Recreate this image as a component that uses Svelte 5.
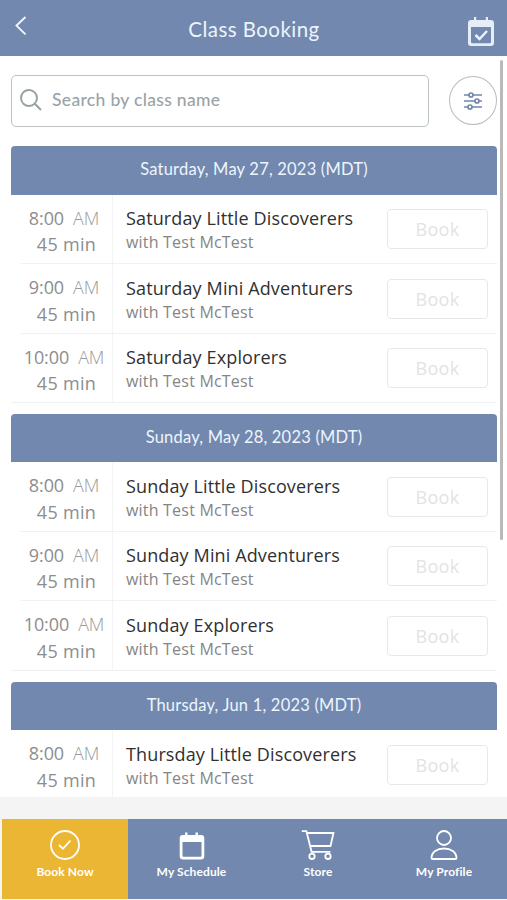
<script>
  let search = '';
  let active = 'Book Now';

  const days = [
    {
      date: 'Saturday, May 27, 2023 (MDT)',
      classes: [
        { time: '8:00', name: 'Saturday Little Discoverers' },
        { time: '9:00', name: 'Saturday Mini Adventurers' },
        { time: '10:00', name: 'Saturday Explorers' }
      ]
    },
    {
      date: 'Sunday, May 28, 2023 (MDT)',
      classes: [
        { time: '8:00', name: 'Sunday Little Discoverers' },
        { time: '9:00', name: 'Sunday Mini Adventurers' },
        { time: '10:00', name: 'Sunday Explorers' }
      ]
    },
    {
      date: 'Thursday, Jun 1, 2023 (MDT)',
      classes: [{ time: '8:00', name: 'Thursday Little Discoverers' }]
    }
  ];

  const tabs = ['Book Now', 'My Schedule', 'Store', 'My Profile'];
</script>

<div class="app">
  <header>
    <button class="back" aria-label="Back">
      <svg width="12" height="20" viewBox="0 0 12 20"><path d="M10.500 1 1.500 9.600l9 8.800" /></svg>
    </button>
    <h1>Class Booking</h1>
    <button class="calendar" aria-label="Calendar">
      <svg width="28" height="31" viewBox="0 0 28 31">
        <path class="solid" fill-rule="evenodd" d="M4 4h3V1h2.200v3h9.600V1H21v3h3a3 3 0 0 1 3 3v20a3 3 0 0 1-3 3H4a3 3 0 0 1-3-3V7a3 3 0 0 1 3-3ZM4 11v15a1.300 1.300 0 0 0 1.300 1.300h17.400A1.300 1.300 0 0 0 24 26V11Z" />
        <path class="check" d="m8.500 19 4 4 7.500-8" />
      </svg>
    </button>
  </header>

  <main>
    <div class="search-row">
      <label class="search">
        <svg width="22" height="22" viewBox="0 0 22 22"><circle cx="9" cy="9" r="8" /><path d="m14.800 14.800 6.200 6.200" /></svg>
        <input type="text" bind:value={search} placeholder="Search by class name" />
      </label>
      <button class="filter" aria-label="Filter">
        <svg width="20" height="18" viewBox="0 0 20 18">
          <path d="M1 3h5M10 3h9M1 9h11M16 9h3M1 15h4M9 15h10" />
          <circle cx="8" cy="3" r="2" /><circle cx="14" cy="9" r="2" /><circle cx="7" cy="15" r="2" />
        </svg>
      </button>
    </div>

    {#each days as day}
      <section>
        <h2>{day.date}</h2>
        {#each day.classes as item}
          <div class="class-item">
            <div class="time">
              <p class="start">{item.time}<span>AM</span></p>
              <p class="length">45 min</p>
            </div>
            <div class="info">
              <h3>{item.name}</h3>
              <p>with Test McTest</p>
            </div>
            <button class="book" disabled>Book</button>
          </div>
        {/each}
      </section>
    {/each}
    <div class="scrollbar"></div>
  </main>

  <nav>
    {#each tabs as tab}
      <button class:active={active === tab} on:click={() => (active = tab)}>
        {#if tab === 'Book Now'}
          <svg width="34" height="32" viewBox="0 0 34 32"><circle cx="17" cy="16" r="14" /><path d="m11 16 4 3.700 7.500-8.200" /></svg>
        {:else if tab === 'My Schedule'}
          <svg width="34" height="32" viewBox="0 0 34 32">
            <path class="solid" fill-rule="evenodd" d="M8 6h2V3.500h2.500V6h8V3.500H23V6h3a3.300 3.300 0 0 1 3.300 3.300v18A3.300 3.300 0 0 1 26 30.600H8a3.300 3.300 0 0 1-3.300-3.300v-18A3.300 3.300 0 0 1 8 6ZM7.500 13v13.500A1.300 1.300 0 0 0 8.800 27.800h16.400a1.300 1.300 0 0 0 1.300-1.300V13Z" />
          </svg>
        {:else if tab === 'Store'}
          <svg width="34" height="32" viewBox="0 0 34 32">
            <path d="M.8 2.200h4.600l5.200 20.600h18.800M6 4h26.500l-3 13H9.200" />
            <circle cx="11" cy="27.300" r="2.700" /><circle cx="27" cy="27.300" r="2.700" />
          </svg>
        {:else}
          <svg width="34" height="32" viewBox="0 0 34 32">
            <circle cx="17" cy="9" r="7" />
            <path d="M5.500 30a1 1 0 0 1-1-1c.2-6 5.500-9.500 12.500-9.500S29.300 23 29.500 29a1 1 0 0 1-1 1Z" />
          </svg>
        {/if}
        <span>{tab}</span>
      </button>
    {/each}
  </nav>
</div>

<style>
  :global(body) {
    margin: 0;
    overflow: hidden;
  }

  .app {
    display: flex;
    flex-direction: column;
    width: 507px;
    height: 900px;
    background-color: #f4f4f4;
    font-family: "Open Sans", "Noto Sans", sans-serif;
  }

  h1, h2, h3, p {
    margin: 0;
    font-weight: 400;
    white-space: nowrap;
  }

  button {
    padding: 0;
    border: none;
    background: none;
    font-family: inherit;
  }

  svg {
    display: block;
    fill: none;
    stroke: #fff;
    stroke-width: 2;
  }

  svg .solid {
    fill: #fff;
    stroke: none;
  }

  header {
    box-sizing: border-box;
    flex: none;
    display: flex;
    align-items: flex-start;
    justify-content: space-between;
    height: 56px;
    padding: 16px 12px 0 15px;
    background-color: #7288ae;
  }

  header svg {
    stroke: #edf3fc;
  }

  header svg .solid {
    fill: #e6edf8;
  }

  .check {
    stroke-width: 2.500;
  }

  h1 {
    margin-left: 14px;
    font-family: Lato, sans-serif;
    font-size: 20.500px;
    line-height: 26px;
    letter-spacing: 0.45px;
    color: #edf3fc;
  }

  main {
    position: relative;
    flex: none;
    box-sizing: border-box;
    height: 741px;
    padding: 19px 10px 0 11px;
    overflow: hidden;
    background-color: #fff;
  }

  .search-row {
    display: flex;
    align-items: center;
    justify-content: space-between;
    height: 52px;
    margin-bottom: 19px;
  }

  .search {
    box-sizing: border-box;
    display: flex;
    align-items: center;
    width: 418px;
    height: 52px;
    padding-left: 8px;
    border: 1.500px solid #bcc2c3;
    border-radius: 5px;
  }

  .search svg {
    margin-top: -2px;
    stroke: #97a1a3;
  }

  input {
    width: 340px;
    margin: -3px 0 0 10px;
    padding: 0;
    border: none;
    outline: none;
    font-family: Lato, sans-serif;
    font-size: 17.500px;
    font-weight: 500;
    letter-spacing: 0.32px;
  }

  input::placeholder {
    color: #9aa3a5;
  }

  .filter {
    box-sizing: border-box;
    display: flex;
    align-items: center;
    justify-content: center;
    width: 48px;
    height: 49px;
    margin-top: -1px;
    border: 1.500px solid #b9bcbf;
    border-radius: 50%;
  }

  .filter svg {
    stroke: #7288ae;
    stroke-width: 1.700;
  }

  section {
    margin-bottom: 10.500px;
  }

  h2 {
    height: 48.500px;
    border-radius: 4px 4px 0 0;
    background-color: #7288ae;
    font-family: Lato, sans-serif;
    font-size: 16.500px;
    line-height: 46px;
    letter-spacing: 0.21px;
    text-align: center;
    color: #edf5ff;
  }

  .class-item {
    box-sizing: border-box;
    display: flex;
    height: 69.600px;
    margin-left: 10px;
    border-bottom: 1px solid #f1f1f1;
  }

  .class-item:last-child {
    margin-left: 0;
  }

  .class-item:last-child .time {
    width: 102px;
    padding-left: 10px;
  }

  .time {
    box-sizing: border-box;
    width: 92px;
    padding-top: 10px;
    border-right: 1px solid #f4f4f4;
    text-align: center;
    font-size: 18px;
    line-height: 26.500px;
    color: #8d8d8d;
  }

  .start {
    padding-right: 5px;
    letter-spacing: -0.1px;
  }

  .start span {
    margin-left: 9px;
    font-weight: 300;
    color: #999;
  }

  .length {
    letter-spacing: 0.3px;
  }

  .info {
    flex: 1;
    padding: 10.500px 0 0 13px;
  }

  h3 {
    font-size: 18px;
    line-height: 26px;
    letter-spacing: 0.13px;
    color: #303030;
  }

  .info p {
    font-size: 16px;
    line-height: 22px;
    letter-spacing: 0.2px;
    color: #858585;
  }

  .book {
    box-sizing: border-box;
    width: 101px;
    height: 40px;
    margin: 14.500px 9px 0 0;
    border: 1.500px solid #e8e8e8;
    border-radius: 4px;
    font-size: 18px;
    letter-spacing: 0.3px;
    color: #e3e3e3;
  }

  .scrollbar {
    position: absolute;
    top: 4px;
    right: 4px;
    width: 3px;
    height: 480px;
    border-radius: 2px;
    background-color: #b9b9b9;
  }

  nav {
    display: grid;
    grid-template-columns: 126px 127px 126px 126px;
    height: 80px;
    margin: 22px 0 0 2px;
    background-color: #7288ae;
  }

  nav button {
    display: flex;
    flex-direction: column;
    align-items: center;
    padding-top: 10px;
    font-family: Lato, sans-serif;
    font-size: 12px;
    font-weight: 700;
    line-height: 18px;
    letter-spacing: 0.1px;
    color: #fff;
  }

  nav svg {
    margin-bottom: 2px;
    stroke-width: 1.800;
  }

  .active {
    background-color: #ebb633;
  }
</style>
